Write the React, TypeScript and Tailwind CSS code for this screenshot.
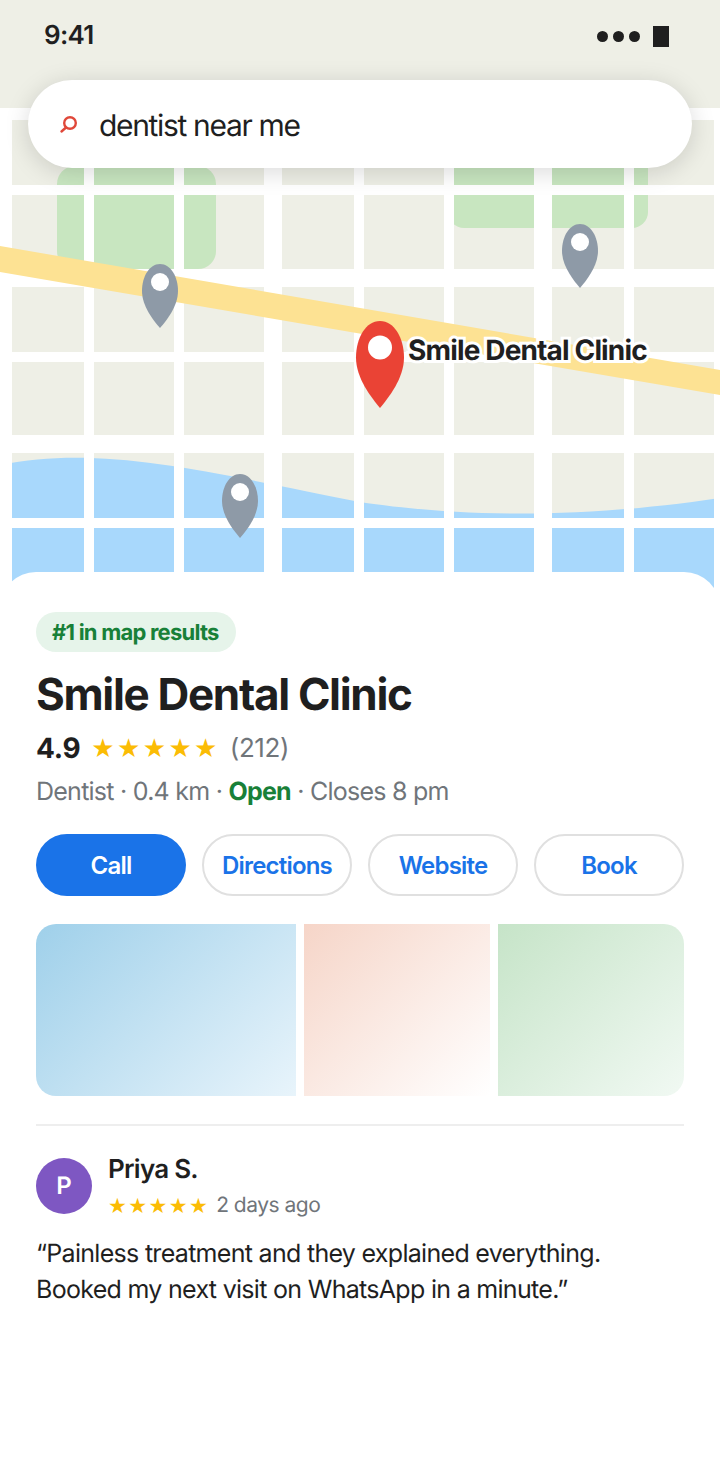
const Pin = ({ x, y, w, h, color, r, cy }: { x: number; y: number; w: number; h: number; color: string; r: number; cy: number }) => (
  <g>
    <path
      d={`M${x + w / 2} ${y}C${x + w * 0.2} ${y} ${x} ${y + h * 0.2} ${x} ${y + h * 0.42}C${x} ${y + h * 0.66} ${x + w * 0.32} ${y + h * 0.88} ${x + w / 2} ${y + h}C${x + w * 0.68} ${y + h * 0.88} ${x + w} ${y + h * 0.66} ${x + w} ${y + h * 0.42}C${x + w} ${y + h * 0.2} ${x + w * 0.8} ${y} ${x + w / 2} ${y}Z`}
      fill={color}
    />
    <circle cx={x + w / 2} cy={cy} r={r} fill="#fff" />
  </g>
);

const hRoads = [[108, 12], [185, 10], [269, 18], [352, 10], [435, 18], [518, 10]];
const vRoads = [[0, 12], [84, 10], [174, 10], [264, 18], [354, 10], [444, 10], [534, 18], [624, 10], [714, 6]];

const MapDrawing = () => (
  <svg width="720" height="500" viewBox="0 108 720 500" className="block">
    <rect x="0" y="108" width="720" height="500" fill="#eeefe6" />
    <rect x="57" y="166" width="159" height="103" rx="18" fill="#c8e6c0" />
    <rect x="448" y="150" width="200" height="78" rx="16" fill="#c8e6c0" />
    <path d="M0 465C100 445 200 470 360 502C440 514 560 522 720 498V608H0Z" fill="#a8d8fc" />
    {hRoads.map(([y, h]) => (
      <rect key={y} x="0" y={y} width="720" height={h} fill="#fff" />
    ))}
    {vRoads.map(([x, w]) => (
      <rect key={x} x={x} y="108" width={w} height="500" fill="#fff" />
    ))}
    <path d="M0 246L720 370V395L0 272Z" fill="#fde293" />
    <Pin x={142} y={264} w={36} h={64} color="#8e9aa7" r={9} cy={282} />
    <Pin x={562} y={224} w={36} h={64} color="#8e9aa7" r={9} cy={242} />
    <Pin x={222} y={474} w={36} h={64} color="#8e9aa7" r={9} cy={492} />
    <Pin x={356} y={321} w={48} h={87} color="#ea4335" r={12} cy={347.5} />
  </svg>
);

const ActionButton = ({ label, primary }: { label: string; primary?: boolean }) => (
  <button
    className={
      primary
        ? "h-[62px] rounded-full bg-[#1a73e8] pt-[2px] text-[24px] font-semibold tracking-[-0.8px] text-white"
        : "h-[62px] rounded-full border-2 border-[#e0e0e0] bg-white pt-[2px] text-[24px] font-semibold tracking-[-0.8px] text-[#1a73e8]"
    }
  >
    {label}
  </button>
);

export default function App() {
  return (
    <div className="relative h-[1480px] w-[720px] overflow-hidden bg-white font-['Inter',sans-serif] text-[#1f1f1f] [text-rendering:geometricPrecision]">
      <div className="h-[108px] bg-[#eeefe6] px-11 pt-[18px]">
        <div className="flex items-center justify-between">
          <span className="text-[26px] leading-[36px] font-semibold tracking-[-0.75px]">9:41</span>
          <div className="mr-[7px] flex items-center">
            <span className="h-[11px] w-[11px] rounded-full bg-[#1f1f1f]" />
            <span className="ml-[5px] h-[11px] w-[11px] rounded-full bg-[#1f1f1f]" />
            <span className="ml-[5px] h-[11px] w-[11px] rounded-full bg-[#1f1f1f]" />
            <span className="ml-[13px] h-[21px] w-4 bg-[#1f1f1f]" />
          </div>
        </div>
      </div>

      <div className="absolute top-[80px] left-[28px] flex h-[88px] w-[664px] items-center rounded-[44px] bg-white pl-[30px] shadow-[0_4px_24px_rgba(0,0,0,0.15)]">
        <svg width="22" height="22" viewBox="0 0 22 22" className="shrink-0">
          <circle cx="12" cy="10" r="5.8" fill="none" stroke="#e0483a" strokeWidth="2.4" />
          <path d="M8 14.5L3.5 18.5" stroke="#e0483a" strokeWidth="2.4" strokeLinecap="round" />
        </svg>
        <span className="mt-[4px] ml-[19px] text-[30px] leading-[40px] tracking-[-1.33px]">dentist near me</span>
      </div>

      <MapDrawing />
      <span className="absolute top-[331px] left-[408px] text-[28px] leading-[38px] font-bold tracking-[-0.85px] [-webkit-text-stroke:6px_#fff] [paint-order:stroke_fill]">
        Smile Dental Clinic
      </span>

      <div className="relative mt-[-36px] rounded-t-[36px] bg-white px-9 pt-10">
        <div className="inline-flex h-10 w-[200px] items-center rounded-full bg-[#e6f4ea] px-4 pt-[2px] text-[22px] font-bold tracking-[-0.78px] whitespace-nowrap text-[#188038]">
          #1 in map results
        </div>
        <h1 className="mt-[14px] text-[44px] leading-[56px] font-bold tracking-[-1.32px]">Smile Dental Clinic</h1>
        <div className="mt-[8px] flex h-9 items-center">
          <span className="text-[28px] font-bold tracking-[-0.3px]">4.9</span>
          <span className="mt-[2px] ml-[11px] font-['DejaVu_Sans',sans-serif] text-[26px] tracking-[2.4px] text-[#fbbc04]">★★★★★</span>
          <span className="ml-[10px] text-[26px] tracking-[-0.4px] text-[#70757a]">(212)</span>
        </div>
        <p className="mt-[8px] text-[25px] leading-[36px] tracking-[-0.75px] text-[#70757a]">
          Dentist · 0.4 km · <span className="font-bold text-[#188038]">Open</span> · Closes 8 pm
        </p>

        <div className="mt-[24px] grid grid-cols-4 gap-4">
          <ActionButton label="Call" primary />
          <ActionButton label="Directions" />
          <ActionButton label="Website" />
          <ActionButton label="Book" />
        </div>

        <div className="mt-7 grid h-[172px] grid-cols-[1.4fr_1fr_1fr] gap-2 overflow-hidden rounded-[20px]">
          <div className="bg-[linear-gradient(135deg,#9fd0ea,#e8f4fb)]" />
          <div className="bg-[linear-gradient(135deg,#f6d5c8,#ffffff)]" />
          <div className="bg-[linear-gradient(135deg,#c6e4c8,#f1f9f3)]" />
        </div>

        <div className="mt-7 border-t-2 border-[#eeeeee] pt-8">
          <div className="flex">
            <div className="flex h-14 w-14 items-center justify-center rounded-full bg-[#7e57c2] text-[24px] font-semibold text-white">
              P
            </div>
            <div className="ml-4">
              <div className="mt-[-4px] text-[26px] leading-[32px] font-semibold tracking-[-0.75px]">Priya S.</div>
              <div className="mt-[5px] flex items-center">
                <span className="mt-[1px] font-['DejaVu_Sans',sans-serif] text-[21px] leading-[28px] tracking-[1.4px] text-[#fbbc04]">★★★★★</span>
                <span className="ml-[7px] text-[21px] leading-[28px] tracking-[-0.5px] text-[#70757a]">2 days ago</span>
              </div>
            </div>
          </div>
          <p className="mt-[16px] text-[25px] leading-[36px] tracking-[-0.7px]">
            “Painless treatment and they explained everything.
            <br />
            Booked my next visit on WhatsApp in a minute.”
          </p>
        </div>
      </div>
    </div>
  );
}
